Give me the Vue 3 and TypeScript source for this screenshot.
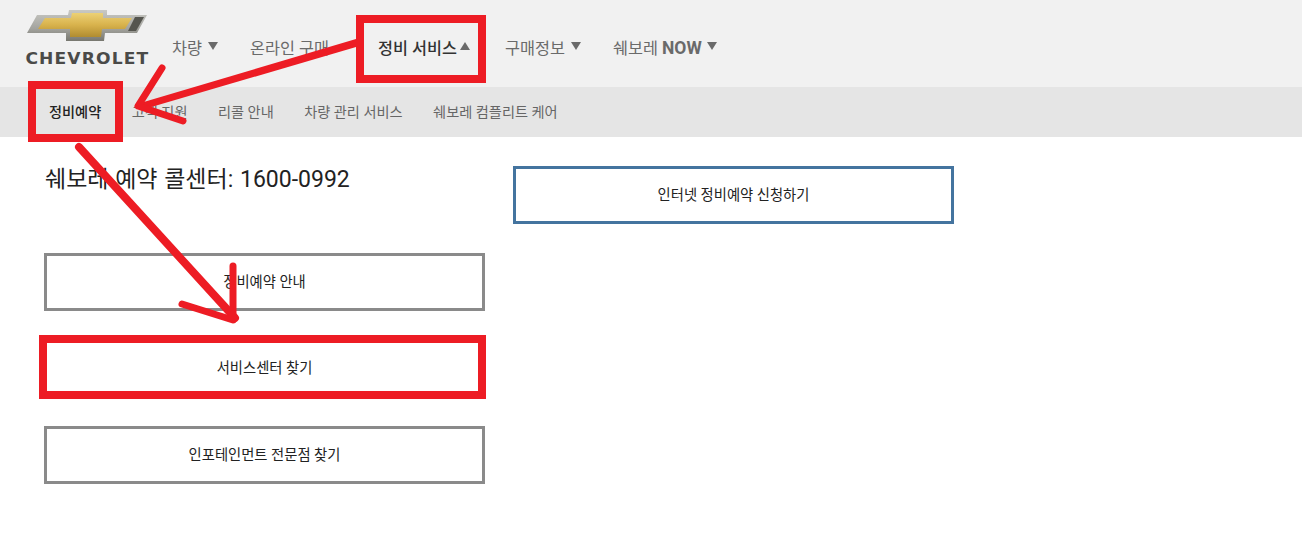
<script setup lang="ts">
const navItems = [
  { label: '차량', caret: 'down' },
  { label: '온라인 구매', caret: '' },
  { label: '정비 서비스', caret: 'up', active: true },
  { label: '구매정보', caret: 'down' },
  { label: '쉐보레', latin: 'NOW', caret: 'down' },
];
const subItems = ['정비예약', '고객 지원', '리콜 안내', '차량 관리 서비스', '쉐보레 컴플리트 케어'];
const leftLinks = ['정비예약 안내', '서비스센터 찾기', '인포테인먼트 전문점 찾기'];
</script>

<template>
  <div class="page">
    <header class="topbar">
      <div class="logo">
        <svg class="bowtie" width="126" height="32" viewBox="0 0 126 32">
          <defs>
            <linearGradient id="gold" x1="0" y1="0" x2="0" y2="1">
              <stop offset="0" stop-color="#ecd175" />
              <stop offset="0.5" stop-color="#d8b24c" />
              <stop offset="1" stop-color="#b08c30" />
            </linearGradient>
            <linearGradient id="silver" x1="0" y1="0" x2="0" y2="1">
              <stop offset="0" stop-color="#c9c9c4" />
              <stop offset="0.6" stop-color="#a3a39e" />
              <stop offset="1" stop-color="#77776f" />
            </linearGradient>
          </defs>
          <path fill="url(#silver)" d="M13 5H44L45 0H83V5H123L113 23H81L80 31H42V23H3Z" />
          <path fill="#55554f" d="M111 7H120L112 21H104Z" />
          <path fill="url(#gold)" d="M21 8H47L48 3H79V8H108L101 19H78L77 27H46V19H14Z" />
        </svg>
        <span class="wordmark">CHEVROLET</span>
      </div>
      <nav class="mainnav">
        <a v-for="item in navItems" :key="item.label" :class="['navlink', { active: item.active }]">
          {{ item.label }}
          <b v-if="item.latin" class="latin">{{ item.latin }}</b>
          <span v-if="item.caret" :class="['caret', item.caret]"></span>
        </a>
      </nav>
    </header>

    <div class="subbar">
      <a v-for="(item, i) in subItems" :key="item" :class="['sublink', { current: i === 0 }]">{{ item }}</a>
    </div>

    <main class="content">
      <section class="col">
        <h2 class="callcenter">쉐보레 예약 콜센터: 1600-0992</h2>
        <div class="links">
          <a v-for="link in leftLinks" :key="link" class="btn">{{ link }}</a>
        </div>
      </section>
      <section class="col right">
        <a class="btn blue">인터넷 정비예약 신청하기</a>
      </section>
    </main>

    <!-- hand-drawn red annotations over the page -->
    <svg class="marks" width="1302" height="539" viewBox="0 0 1302 539" fill="none" stroke="#ed1c24">
      <rect x="360" y="19" width="122" height="60" stroke-width="8" />
      <rect x="32" y="85" width="87" height="53" stroke-width="8" />
      <rect x="43" y="339" width="439" height="56" stroke-width="8" />
      <path fill="#ed1c24" stroke="none" d="M356 39V47L141 110L137 104Z" />
      <g stroke-width="7" stroke-linecap="round" stroke-linejoin="round">
        <path d="M162 68L138 106L183 121" />
        <path d="M79 147L235 318" stroke-width="8" />
        <path d="M233 266V320L182 304" />
      </g>
    </svg>
  </div>
</template>

<style>
html, body { margin: 0; background: #fff; }
</style>

<style scoped>
.page {
  position: relative;
  width: 1302px;
  height: 539px;
  overflow: hidden;
  background: #fff;
  font-family: Roboto, "Noto Sans CJK KR", sans-serif;
}
.topbar {
  display: flex;
  height: 87px;
  padding-left: 24px;
  box-sizing: border-box;
  background: #f1f1f1;
}
.logo {
  display: flex;
  flex-direction: column;
  width: 126px;
  padding-top: 10px;
  align-items: center;
}
.wordmark {
  margin-top: 10px;
  font-family: "DejaVu Sans", sans-serif;
  font-weight: 700;
  font-size: 15px;
  line-height: 14px;
  letter-spacing: 1px;
  color: #4a4a48;
  transform: scaleX(1.14);
  white-space: nowrap;
}
.mainnav {
  display: flex;
  margin-left: 22px;
  padding-top: 38px;
  font-size: 16.3px;
  line-height: 22px;
}
.navlink {
  color: #6a6a6a;
  white-space: nowrap;
}
.navlink:nth-child(1) { width: 78px; }
.navlink:nth-child(2) { width: 128px; }
.navlink:nth-child(3) { width: 127px; }
.navlink:nth-child(4) { width: 108px; }
.navlink.active { color: #333; font-weight: 500; }
.latin { font-weight: 700; font-size: 17.5px; line-height: 0; }
.caret {
  display: inline-block;
  margin-left: 2px;
  border-left: 5px solid transparent;
  border-right: 5px solid transparent;
  vertical-align: 4px;
}
.caret.down { border-top: 8px solid #6a6a6a; }
.caret.up { border-bottom: 8px solid #6a6a6a; margin-left: -1px; }
.latin + .caret { margin-left: 5px; }
.subbar {
  display: flex;
  height: 50px;
  padding-left: 49px;
  padding-bottom: 3px;
  box-sizing: border-box;
  gap: 30.5px;
  align-items: center;
  background: #e5e5e5;
  font-size: 14.2px;
}
.sublink { color: #666; white-space: nowrap; }
.sublink.current { color: #222; font-weight: 500; }
.content {
  display: flex;
  gap: 28px;
  padding-left: 44px;
}
.col { width: 441px; }
.right { padding-top: 29px; }
.callcenter {
  margin: 26px 0 0 1px;
  font-size: 23px;
  line-height: 32px;
  font-weight: 400;
  word-spacing: 1px;
  color: #222;
  white-space: nowrap;
  position: relative;
  top: 1px;
}
.links {
  display: flex;
  flex-direction: column;
  gap: 28.5px;
  margin-top: 58px;
}
.btn {
  display: flex;
  align-items: center;
  justify-content: center;
  height: 58px;
  padding-bottom: 4px;
  box-sizing: border-box;
  border: 3px solid #8a8a8a;
  background: #fff;
  font-size: 14.3px;
  color: #222;
}
.btn.blue { border-color: #44749f; }
.marks {
  position: absolute;
  left: 0;
  top: 0;
  pointer-events: none;
}
</style>
